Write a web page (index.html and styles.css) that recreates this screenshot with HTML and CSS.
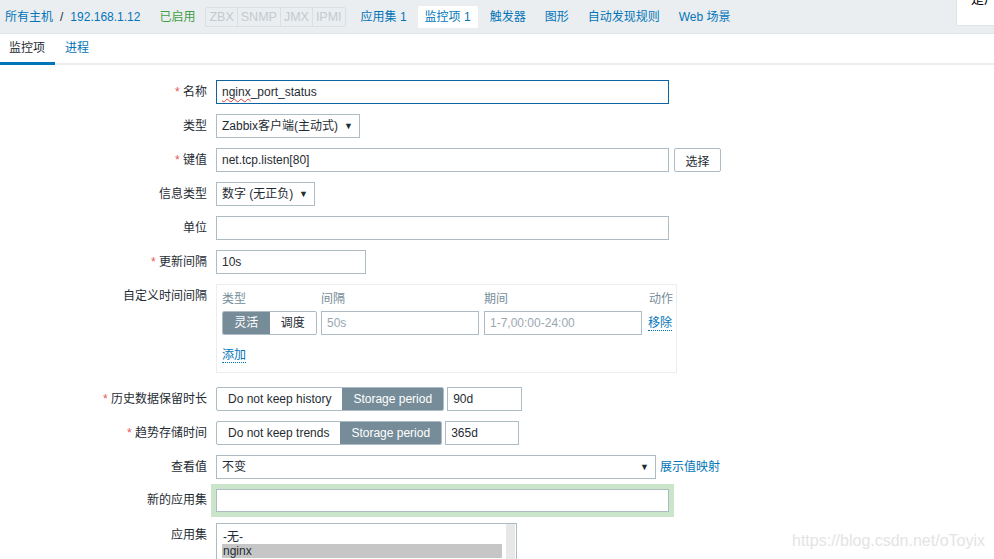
FILE: index.html
```html
<!DOCTYPE html>
<html>
<head>
<meta charset="utf-8">
<link rel="stylesheet" href="styles.css">
</head>
<body>
<div class="topbar">
  <a class="lnk first">所有主机</a><span class="sep">/</span><a class="lnk">192.168.1.12</a>
  <span class="on">已启用</span>
  <span class="avail"><span>ZBX</span><span>SNMP</span><span>JMX</span><span>IPMI</span></span>
  <a class="lnk nav">应用集 1</a>
  <span class="cur">监控项 1</span>
  <a class="lnk nav">触发器</a>
  <a class="lnk nav">图形</a>
  <a class="lnk nav">自动发现规则</a>
  <a class="lnk nav">Web 场景</a>
  <div class="corner"><span>是户</span></div>
</div>
<div class="tabs">
  <span class="tab active">监控项</span>
  <span class="tab">进程</span>
</div>
<div class="form">
  <div class="row">
    <label class="lbl"><i>*</i> 名称</label>
    <div class="input w453 focus"><span class="spell">nginx</span>_port_status</div>
  </div>
  <div class="row">
    <label class="lbl">类型</label>
    <div class="select w144">Zabbix客户端(主动式)<span class="arr">▼</span></div>
  </div>
  <div class="row">
    <label class="lbl"><i>*</i> 键值</label>
    <div class="input w453">net.tcp.listen[80]</div>
    <button class="btn">选择</button>
  </div>
  <div class="row">
    <label class="lbl">信息类型</label>
    <div class="select w99">数字 (无正负)<span class="arr">▼</span></div>
  </div>
  <div class="row">
    <label class="lbl">单位</label>
    <div class="input w453"></div>
  </div>
  <div class="row">
    <label class="lbl"><i>*</i> 更新间隔</label>
    <div class="input w150">10s</div>
  </div>
  <div class="row custom-row">
    <label class="lbl">自定义时间间隔</label>
    <div class="custom">
      <div class="chead">
        <span class="c1">类型</span><span class="c2">间隔</span><span class="c3">期间</span><span class="c4">动作</span>
      </div>
      <div class="cbody">
        <div class="seg c1"><span class="on-seg">灵活</span><span>调度</span></div>
        <div class="input c2 ph">50s</div>
        <div class="input c3 ph">1-7,00:00-24:00</div>
        <a class="dot c4">移除</a>
      </div>
      <a class="dot add">添加</a>
    </div>
  </div>
  <div class="row">
    <label class="lbl"><i>*</i> 历史数据保留时长</label>
    <div class="seg"><span>Do not keep history</span><span class="on-seg">Storage period</span></div>
    <div class="input w75">90d</div>
  </div>
  <div class="row">
    <label class="lbl"><i>*</i> 趋势存储时间</label>
    <div class="seg"><span>Do not keep trends</span><span class="on-seg">Storage period</span></div>
    <div class="input w74">365d</div>
  </div>
  <div class="row">
    <label class="lbl">查看值</label>
    <div class="select w440">不变<span class="arr">▼</span></div>
    <a class="lnk map">展示值映射</a>
  </div>
  <div class="row glow-row">
    <label class="lbl">新的应用集</label>
    <div class="glow"><div class="input w453 h23"></div></div>
  </div>
  <div class="row">
    <label class="lbl">应用集</label>
    <div class="listbox">
      <div class="opts">
        <div class="opt">-无-</div>
        <div class="opt sel">nginx</div>
      </div>
      <div class="sbar"></div>
    </div>
  </div>
</div>
<div class="wm">https://blog.csdn.net/oToyix</div>
</body>
</html>
```

FILE: styles.css
```css
* { box-sizing: border-box; }
html, body { margin: 0; padding: 0; }
body {
  font: 12px "Liberation Sans", Arial, "Noto Sans CJK SC", sans-serif;
  color: #1f2c33;
  background: #fff;
  height: 559px;
  overflow: hidden;
  position: relative;
}
a { text-decoration: none; }
.lnk { color: #0275b8; }

.topbar {
  height: 34px;
  background: #ebeef0;
  border-bottom: 1px solid #dfe4e7;
  display: flex;
  align-items: center;
  padding-left: 5px;
  position: relative;
  line-height: 14px;
}
.sep { margin: 0 7px; color: #1f2c33; }
.on { color: #429e47; margin-left: 19px; }
.avail {
  display: flex;
  margin-left: 10px;
  border: 1px solid #dadfe2;
  border-radius: 2px;
  height: 20px;
}
.avail span {
  color: #c2cacf;
  padding: 0 3px;
  line-height: 18px;
  border-left: 1px solid #dadfe2;
  font-size: 12.5px;
}
.avail span:first-child { border-left: 0; }
.nav { margin-left: 19px; }
.avail + .nav { margin-left: 15px; }
.cur {
  background: #fff;
  margin-left: 11px;
  height: 22px;
  line-height: 22px;
  padding: 0 7px;
  border-radius: 2px;
  color: #0275b8;
}
.cur + .nav { margin-left: 12px; }
.corner {
  position: absolute;
  right: 0;
  top: 0;
  width: 38px;
  height: 26px;
  background: #fff;
  border-bottom: 1px solid #dfe4e7;
  border-left: 1px solid #dfe4e7;
  overflow: hidden;
}
.corner span {
  display: block;
  margin: -8px 0 0 14px;
  font-size: 13px;
  line-height: 14px;
  color: #000;
  white-space: nowrap;
}

.tabs {
  height: 31px;
  display: flex;
  border-bottom: 2px solid #ebeef0;
}
.tab {
  padding: 0 10px 0 9px;
  line-height: 28px;
  color: #0275b8;
  height: 31px;
}
.tab + .tab { padding-left: 10px; }
.tab.active {
  color: #1f2c33;
  border-bottom: 3px solid #0275b8;
  width: 55px;
}

.form { padding-top: 15px; }
.row {
  display: flex;
  align-items: flex-start;
  margin-bottom: 10px;
}
.lbl {
  width: 207px;
  margin-right: 9px;
  text-align: right;
  line-height: 24px;
  flex: none;
}
.lbl i { font-style: normal; color: #e45959; }

.input, .select {
  height: 24px;
  line-height: 22px;
  border: 1px solid #acbbc4;
  padding: 0 5px;
  background: #fff;
  white-space: nowrap;
  overflow: hidden;
}
.input.focus { border-color: #0e64a0; }
.spell { text-decoration: underline wavy #e0403a; text-decoration-thickness: 1px; text-underline-offset: 2px; }
.select { position: relative; padding-right: 18px; }
.arr {
  position: absolute;
  right: 6px;
  top: 0;
  font-size: 9px;
  color: #1f2c33;
}
.w453 { width: 453px; }
.w144 { width: 144px; }
.w99 { width: 99px; }
.w150 { width: 150px; }
.w75 { width: 75px; margin-left: 3px; }
.w74 { width: 74px; margin-left: 3px; }
.w440 { width: 440px; }
.h23 { height: 23px; }
.btn {
  margin-left: 5px;
  height: 24px;
  width: 47px;
  border: 1px solid #acbbc4;
  border-radius: 2px;
  background: #fff;
  font: inherit;
  color: #1f2c33;
  padding: 0;
}

.custom-row { margin-bottom: 14px; }
.custom {
  width: 461px;
  height: 89px;
  border: 1px solid #ebeef0;
  padding: 2px 0 0 5px;
}
.chead, .cbody { display: flex; align-items: center; }
.chead { height: 20px; color: #768d99; }
.cbody { height: 24px; margin-top: 4px; }
.c1 { width: 95px; flex: none; }
.c2 { width: 158px; margin-left: 4px; flex: none; }
.c3 { width: 158px; margin-left: 5px; flex: none; }
.c4 { margin-left: 6px; flex: none; white-space: nowrap; }
.chead .c4 { margin-left: 7px; }
.ph { color: #9aa7b0; }
.dot {
  color: #0275b8;
  border-bottom: 1px dotted #0275b8;
  line-height: 14px;
}
.add {
  display: inline-block;
  margin-top: 13px;
}

.seg {
  display: flex;
  height: 24px;
  border: 1px solid #acbbc4;
  border-radius: 2px;
  overflow: hidden;
  flex: none;
}
.seg span {
  padding: 0 11px;
  line-height: 22px;
  white-space: nowrap;
  color: #1f2c33;
}
.seg .on-seg { background: #768d99; color: #fff; }
.custom .seg span { width: 47px; padding: 0; text-align: center; }

.map { margin-left: 4px; line-height: 24px; }

.glow-row { margin-top: -5px; margin-bottom: 6px; }
.glow-row .lbl { padding-top: 4px; margin-right: 4px; }
.glow {
  background: #cbe5cb;
  padding: 5px;
  width: 463px;
}

.listbox {
  width: 301px;
  height: 60px;
  border: 1px solid #acbbc4;
  display: flex;
  padding: 6px 0 0 5px;
}
.opts { width: 280px; }
.opt { line-height: 14px; height: 14px; padding-left: 1px; }
.opt.sel { background: #c6c6c6; }
.sbar {
  width: 9px;
  margin-left: 4px;
  margin-top: -6px;
  background: #e8e8e8;
}

.wm {
  position: absolute;
  right: 9px;
  bottom: 9px;
  font-size: 16px;
  color: #e4e4e4;
}
```
